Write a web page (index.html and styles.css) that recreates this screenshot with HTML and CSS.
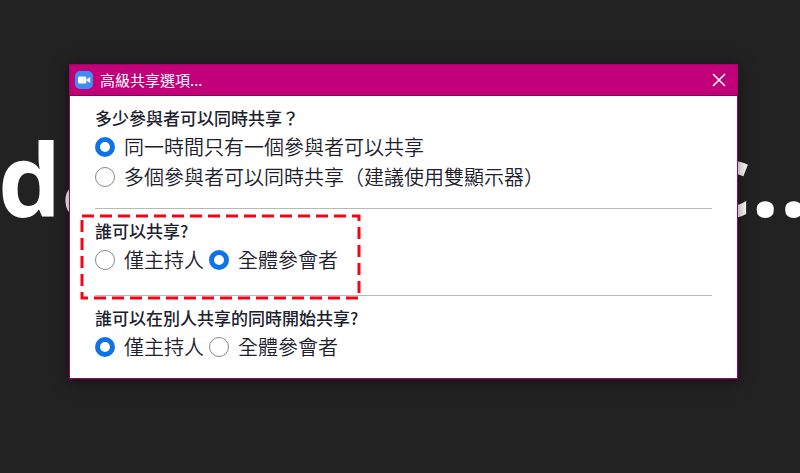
FILE: index.html
```html
<!DOCTYPE html>
<html lang="zh-Hant">
<head>
  <meta charset="UTF-8">
  <meta name="viewport" content="width=device-width, initial-scale=1">
  <title>高級共享選項</title>
  <link rel="stylesheet" href="styles.css">
</head>
<body>
  <div class="backdrop" aria-hidden="true">
    <span>da</span>
    <span>c..</span>
  </div>

  <form class="dialog" role="dialog" aria-labelledby="dialogTitle">
    <header class="titlebar">
      <svg class="logo" viewBox="0 0 18 18" aria-hidden="true">
        <rect width="18" height="18" rx="5" fill="#3f8cf4"/>
        <rect x="3" y="5.500" width="8.500" height="7" rx="1.500" fill="#fff"/>
        <path d="M12 8.200 15.200 6v6L12 9.800z" fill="#fff"/>
      </svg>
      <h1 id="dialogTitle">高級共享選項...</h1>
      <button type="button" class="close" aria-label="關閉">
        <svg viewBox="0 0 14 14" aria-hidden="true">
          <path d="M1 1l12 12M13 1L1 13" stroke="currentColor" stroke-width="1.500"/>
        </svg>
      </button>
    </header>

    <div class="content">
      <fieldset class="group">
        <legend>多少參與者可以同時共享？</legend>
        <div class="options stacked">
          <label><input type="radio" name="howMany" checked>同一時間只有一個參與者可以共享</label>
          <label><input type="radio" name="howMany">多個參與者可以同時共享（建議使用雙顯示器）</label>
        </div>
      </fieldset>

      <fieldset class="group marked">
        <legend>誰可以共享?</legend>
        <div class="options">
          <label><input type="radio" name="whoShare">僅主持人</label>
          <label><input type="radio" name="whoShare" checked>全體參會者</label>
        </div>
        <svg class="marker" aria-hidden="true">
          <rect width="100%" height="100%"/>
        </svg>
      </fieldset>

      <fieldset class="group">
        <legend>誰可以在別人共享的同時開始共享?</legend>
        <div class="options">
          <label><input type="radio" name="whoStart" checked>僅主持人</label>
          <label><input type="radio" name="whoStart">全體參會者</label>
        </div>
      </fieldset>
    </div>
  </form>
</body>
</html>
```
FILE: styles.css
```css
* { box-sizing: border-box; }
body {
  margin: 0;
  min-height: 100vh;
  display: grid;
  align-items: start;
  overflow: hidden;
  background: #222;
  color: #20202c;
  font-family: "Noto Sans CJK TC", "Noto Sans", sans-serif;
}
.backdrop, .dialog { grid-area: 1 / 1; }

/* large text behind the dialog */
.backdrop {
  display: flex;
  justify-content: space-between;
  margin: 110px -8px 0 -2px;
  color: #fff;
  font: bold 100px/136px "Open Sans", sans-serif;
}

.dialog {
  position: relative;
  margin: 64px 62px 0 69px;
  border: 1px solid #a8006b;
  background: #fff;
  box-shadow: 0 2px 14px rgba(0, 0, 0, 0.5);
}
.titlebar {
  display: flex;
  align-items: center;
  height: 31px;
  padding: 0 11px 0 5px;
  border-bottom: 1px solid #8c0058;
  background: #c2007a;
  color: #fff;
}
.titlebar h1 {
  flex: 1;
  margin: 0 0 0 7px;
  font-size: 15px;
  font-weight: 400;
  line-height: 24px;
}
.logo { width: 18px; height: 18px; }
.close {
  padding: 0;
  border: 0;
  background: none;
  color: #fff;
}
.close svg { display: block; width: 14px; height: 14px; }

.content { padding: 0 25px; }
.group {
  position: relative;
  min-width: 0;
  margin: 0;
  padding: 10px 0 16px;
  border: 0;
  border-bottom: 1px solid #b8b8b8;
}
.group:last-child { border-bottom: 0; }
.group legend {
  float: left;
  width: 100%;
  padding: 0;
  margin-bottom: 2px;
  font-size: 17px;
  font-weight: 500;
  line-height: 24px;
}
.options {
  clear: both;
  display: flex;
  gap: 5px;
}
.stacked { flex-direction: column; gap: 0; }
.options label {
  display: flex;
  align-items: center;
  gap: 9px;
  height: 30px;
  font-size: 20px;
  font-weight: 350;
  line-height: 30px;
}
input[type="radio"] {
  appearance: none;
  flex: none;
  width: 20px;
  height: 20px;
  margin: 0;
  border: 1px solid #888;
  border-radius: 50%;
  background: #fff;
}
input[type="radio"]:checked { border: 5px solid #0e72ed; }

/* dashed callout around the second group */
.marked { padding-bottom: 20px; }
.marker {
  position: absolute;
  top: 7px;
  left: -13px;
  width: 277px;
  height: 82px;
  overflow: visible;
}
.marker rect {
  fill: none;
  stroke: #f50514;
  stroke-width: 3;
  stroke-dasharray: 12 6;
}
```
